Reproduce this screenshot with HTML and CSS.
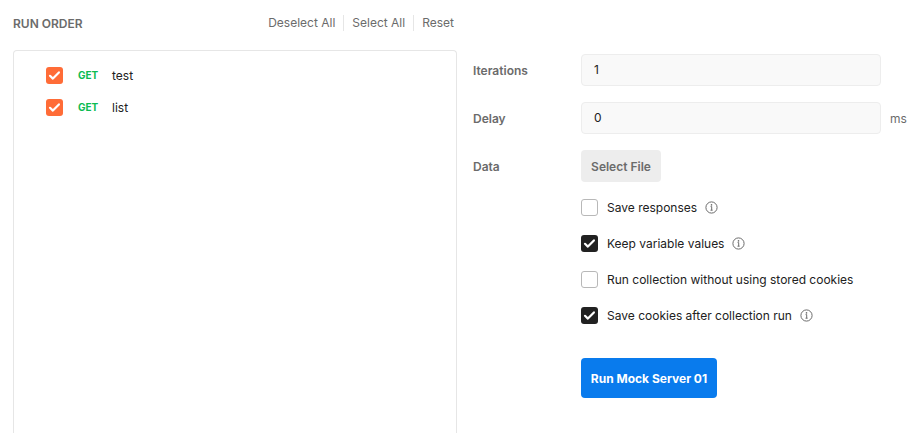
FILE: index.html
```html
<!DOCTYPE html>
<html lang="en">
<head>
    <meta charset="UTF-8">
    <meta name="viewport" content="width=device-width, initial-scale=1.0">
    <title>Collection Runner</title>
    <link rel="stylesheet" href="styles.css">
</head>
<body>
    <div class="runner">
        <div class="order">
            <div class="order-heading">
                <span class="order-title">RUN ORDER</span>
                <div class="order-actions">
                    <span class="action">Deselect All</span>
                    <span class="action">Select All</span>
                    <span class="action">Reset</span>
                </div>
            </div>
            <div class="order-list">
                <div class="request">
                    <span class="check check-orange">
                        <svg width="17" height="17" viewBox="0 0 17 17"><path d="M4 8.8l2.9 2.8 6-6.2" fill="none" stroke="#fff" stroke-width="2.2" stroke-linecap="round" stroke-linejoin="round"/></svg>
                    </span>
                    <span class="method">GET</span>
                    <span class="request-name">test</span>
                </div>
                <div class="request">
                    <span class="check check-orange">
                        <svg width="17" height="17" viewBox="0 0 17 17"><path d="M4 8.8l2.9 2.8 6-6.2" fill="none" stroke="#fff" stroke-width="2.2" stroke-linecap="round" stroke-linejoin="round"/></svg>
                    </span>
                    <span class="method">GET</span>
                    <span class="request-name">list</span>
                </div>
            </div>
        </div>

        <div class="settings">
            <div class="field">
                <label class="field-label">Iterations</label>
                <div class="input">1</div>
            </div>
            <div class="field">
                <label class="field-label">Delay</label>
                <div class="input">0</div>
                <span class="unit">ms</span>
            </div>
            <div class="field">
                <label class="field-label">Data</label>
                <button class="btn-file">Select File</button>
            </div>

            <div class="options">
                <div class="option">
                    <span class="check"></span>
                    <span class="option-text">Save responses</span>
                    <svg class="info" width="13" height="13" viewBox="0 0 13 13"><circle cx="6.5" cy="6.5" r="5.6" fill="none" stroke="#6b6b6b" stroke-width="1"/><circle cx="6.5" cy="3.9" r="0.8" fill="#6b6b6b"/><path d="M5.6 5.6h1.1v3.6M5.5 9.2h2.1" fill="none" stroke="#6b6b6b" stroke-width="1"/></svg>
                </div>
                <div class="option">
                    <span class="check check-dark">
                        <svg width="17" height="17" viewBox="0 0 17 17"><path d="M4 8.8l2.9 2.8 6-6.2" fill="none" stroke="#fff" stroke-width="2.2" stroke-linecap="round" stroke-linejoin="round"/></svg>
                    </span>
                    <span class="option-text">Keep variable values</span>
                    <svg class="info" width="13" height="13" viewBox="0 0 13 13"><circle cx="6.5" cy="6.5" r="5.6" fill="none" stroke="#6b6b6b" stroke-width="1"/><circle cx="6.5" cy="3.9" r="0.8" fill="#6b6b6b"/><path d="M5.6 5.6h1.1v3.6M5.5 9.2h2.1" fill="none" stroke="#6b6b6b" stroke-width="1"/></svg>
                </div>
                <div class="option">
                    <span class="check"></span>
                    <span class="option-text">Run collection without using stored cookies</span>
                </div>
                <div class="option">
                    <span class="check check-dark">
                        <svg width="17" height="17" viewBox="0 0 17 17"><path d="M4 8.8l2.9 2.8 6-6.2" fill="none" stroke="#fff" stroke-width="2.2" stroke-linecap="round" stroke-linejoin="round"/></svg>
                    </span>
                    <span class="option-text">Save cookies after collection run</span>
                    <svg class="info" width="13" height="13" viewBox="0 0 13 13"><circle cx="6.5" cy="6.5" r="5.6" fill="none" stroke="#6b6b6b" stroke-width="1"/><circle cx="6.5" cy="3.9" r="0.8" fill="#6b6b6b"/><path d="M5.6 5.6h1.1v3.6M5.5 9.2h2.1" fill="none" stroke="#6b6b6b" stroke-width="1"/></svg>
                </div>
            </div>

            <button class="btn-run">Run Mock Server 01</button>
        </div>
    </div>
</body>
</html>
```
FILE: styles.css
```css
html, body {
    margin: 0;
    height: 100%;
    overflow: hidden;
    background: #fff;
}

body {
    font-family: Inter, "Noto Sans", sans-serif;
    font-size: 12px;
    color: #212121;
}

.runner {
    display: flex;
    height: 100%;
    padding-left: 13px;
}

/* left side: run order */
.order {
    width: 444px;
    display: flex;
    flex-direction: column;
}

.order-heading {
    height: 46px;
    display: flex;
    align-items: center;
    justify-content: space-between;
    padding-right: 3px;
    margin-bottom: 4px;
}

.order-title {
    font-weight: 600;
    color: #6b6b6b;
}

.order-actions {
    display: flex;
    align-items: center;
}

.action {
    color: #6b6b6b;
    padding: 0 8px;
    line-height: 16px;
    border-left: 1px solid #e6e6e6;
}

.action:first-child {
    border-left: none;
}

.action:last-child {
    padding-right: 0;
}

.order-list {
    flex: 1;
    border: 1px solid #e6e6e6;
    border-bottom: none;
    border-radius: 4px 4px 0 0;
    padding: 8px 0 0 32px;
}

.request {
    height: 32px;
    display: flex;
    align-items: center;
}

.method {
    color: #0cbb52;
    font-size: 10px;
    font-weight: 700;
    margin-left: 15px;
    width: 34px;
}

/* checkboxes */
.check {
    width: 15px;
    height: 15px;
    border: 1px solid #b8b8b8;
    border-radius: 3px;
    display: flex;
    align-items: center;
    justify-content: center;
    flex-shrink: 0;
}

.check-orange {
    width: 17px;
    height: 17px;
    border: none;
    background: #ff6c37;
    border-radius: 3px;
}

.check-dark {
    width: 17px;
    height: 17px;
    border: none;
    background: #212121;
}

/* right side: settings */
.settings {
    padding-left: 16px;
    padding-top: 54px;
}

.field {
    display: flex;
    align-items: center;
    height: 32px;
    margin-bottom: 16px;
}

.field-label {
    width: 108px;
    font-weight: 600;
    color: #6b6b6b;
}

.input {
    width: 286px;
    height: 30px;
    line-height: 30px;
    padding-left: 12px;
    background: #f9f9f9;
    border: 1px solid #ededed;
    border-radius: 4px;
    color: #212121;
}

.unit {
    margin-left: 9px;
    color: #6b6b6b;
}

.btn-file {
    height: 32px;
    width: 80px;
    border: none;
    border-radius: 4px;
    background: #ededed;
    font-family: inherit;
    font-size: 12px;
    font-weight: 600;
    color: #6b6b6b;
}

.options {
    margin-left: 108px;
    margin-top: -9px;
}

.option {
    height: 36px;
    display: flex;
    align-items: center;
}

.option-text {
    margin-left: 9px;
    color: #212121;
}

.info {
    margin-left: 8px;
}

.btn-run {
    margin: 25px 0 0 108px;
    height: 40px;
    width: 136px;
    border: none;
    border-radius: 4px;
    background: #097bed;
    color: #fff;
    font-family: inherit;
    font-size: 12px;
    font-weight: 700;
}
```
